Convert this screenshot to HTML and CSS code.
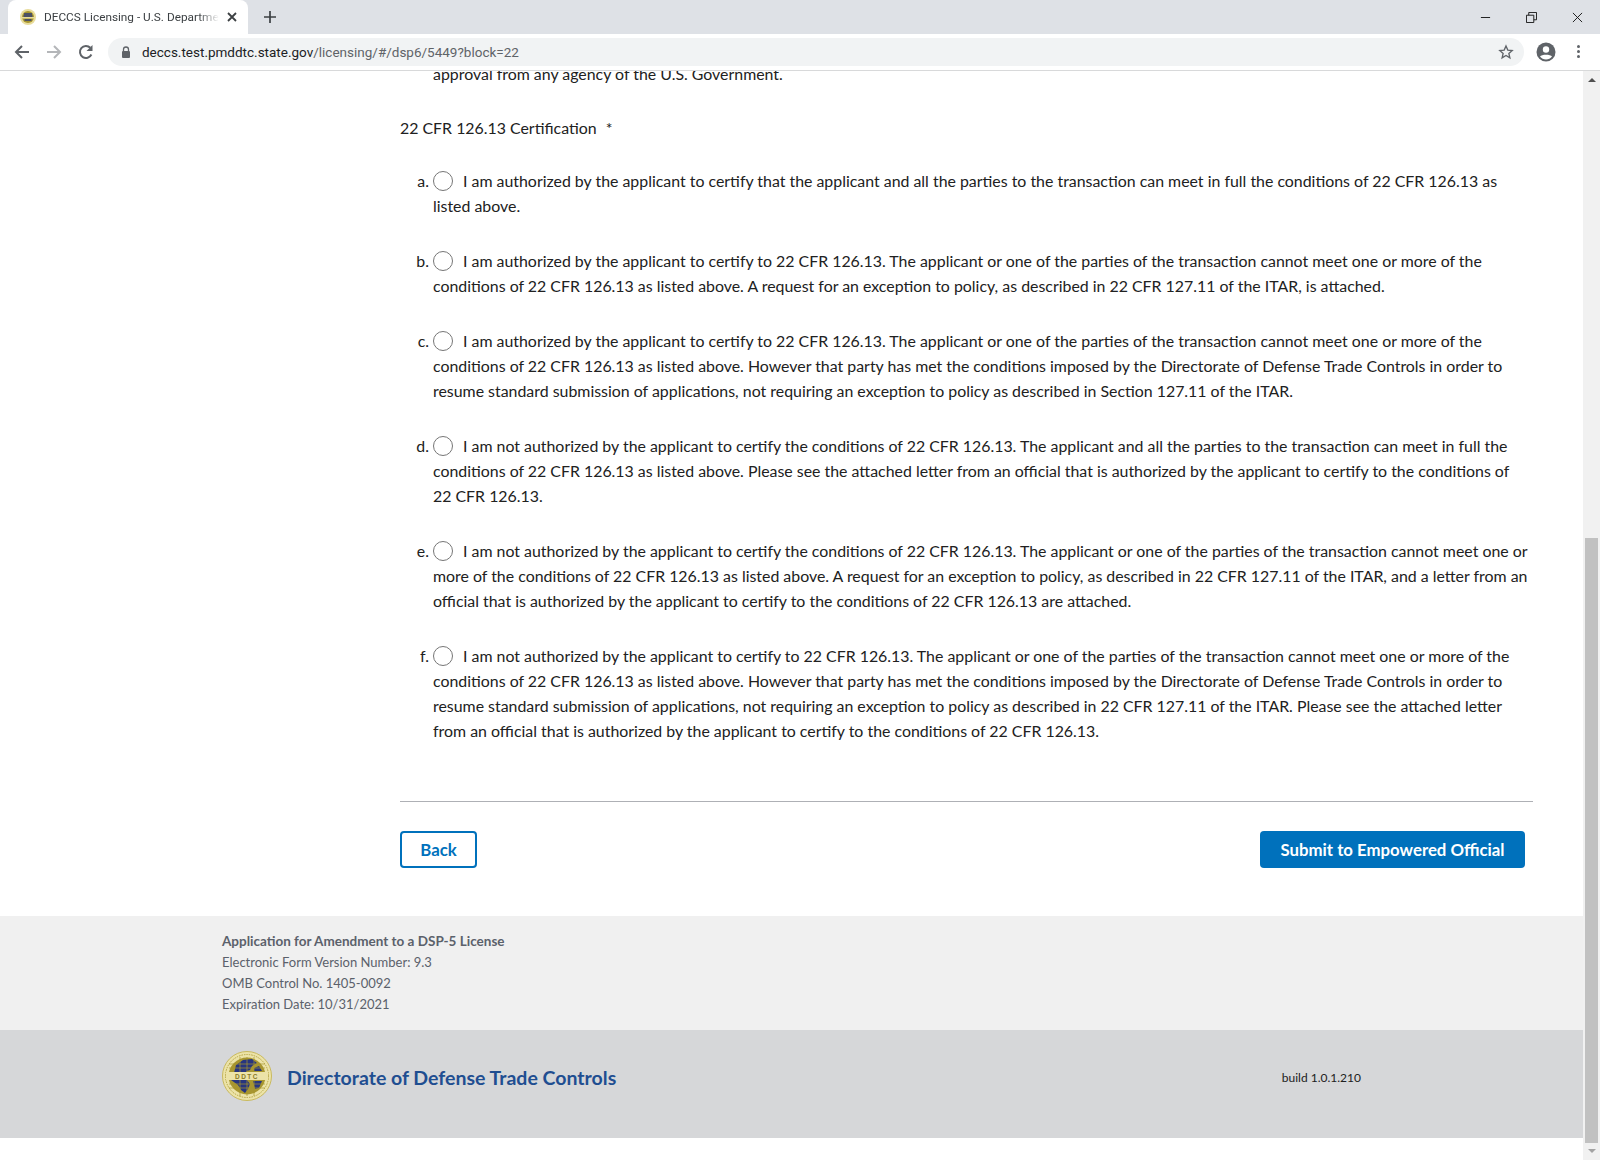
FILE: index.html
```html
<!DOCTYPE html>
<html lang="en">
<head>
  <meta charset="UTF-8">
  <title>DECCS Licensing - U.S. Department of State</title>
  <link rel="stylesheet" href="styles.css">
</head>
<body>
  <div class="tab-strip">
    <div class="tab">
      <svg class="favicon" viewBox="0 0 16 16">
        <circle cx="8" cy="8" r="8" fill="#e8dc9c"/>
        <circle cx="8" cy="8" r="6" fill="#a8962f"/>
        <path d="M4 5h8M3.500 7h9" stroke="#2e3a78" stroke-width="1.500"/>
        <rect x="1" y="8" width="14" height="1.500" fill="#e8dc9c"/>
        <path d="M4.500 11h7" stroke="#2e3a78" stroke-width="1.500"/>
      </svg>
      <span class="tab-title">DECCS Licensing - U.S. Department of State</span>
      <svg class="tab-close" viewBox="0 0 10 10"><path d="M1 1l8 8M9 1l-8 8" stroke="#3c4043" stroke-width="1.800"/></svg>
    </div>
    <svg class="new-tab" viewBox="0 0 12 12"><path d="M6 0v12M0 6h12" stroke="#3c4043" stroke-width="1.700"/></svg>
    <div class="window-controls">
      <svg viewBox="0 0 12 12"><path d="M1 6h10" stroke="#111" stroke-width="1"/></svg>
      <svg viewBox="0 0 12 12"><path d="M.5 3.500h8v8h-8zM3 3.500V.5h8.500v8H8.500" fill="none" stroke="#111" stroke-width="1"/></svg>
      <svg viewBox="0 0 12 12"><path d="M1 1l10 10M11 1L1 11" stroke="#111" stroke-width="1"/></svg>
    </div>
  </div>
  <div class="toolbar">
    <svg class="nav-icon" viewBox="0 0 16 16"><path d="M15 8H2M8 2L2 8l6 6" fill="none" stroke="#5f6368" stroke-width="2"/></svg>
    <svg class="nav-icon" viewBox="0 0 16 16"><path d="M1 8h13M8 2l6 6-6 6" fill="none" stroke="#b4b6b9" stroke-width="2"/></svg>
    <svg class="nav-icon nav-last" viewBox="0 0 16 16"><path d="M13.400 10.500A6 6 0 1 1 12.300 3.800" fill="none" stroke="#5f6368" stroke-width="2"/><path d="M14.500 1v6h-6z" fill="#5f6368"/></svg>
    <div class="omnibox">
      <svg class="lock" viewBox="0 0 10 12"><path d="M2.500 5V3.500a2.500 2.500 0 0 1 5 0V5" fill="none" stroke="#5f6368" stroke-width="1.300"/><rect x="1" y="5" width="8" height="7" rx="1" fill="#5f6368"/></svg>
      <span class="url"><span class="url-host">deccs.test.pmddtc.state.gov</span>/licensing/#/dsp6/5449?block=22</span>
      <svg class="star" viewBox="0 0 24 24"><path d="M12 3l2.700 6.100 6.600.7-5 4.400 1.500 6.500L12 17.300l-5.800 3.400 1.500-6.500-5-4.400 6.600-.7z" fill="none" stroke="#5f6368" stroke-width="2"/></svg>
    </div>
    <svg class="avatar" viewBox="0 0 20 20"><circle cx="10" cy="10" r="9.500" fill="#5f6368"/><circle cx="10" cy="7.500" r="3.200" fill="#fff"/><path d="M4 14.500c1.500-2.500 10.500-2.500 12 0-1.500 2-3.500 3-6 3s-4.500-1-6-3z" fill="#fff"/></svg>
    <div class="menu-dots"><i></i><i></i><i></i></div>
  </div>

  <div class="viewport">
    <div class="page">
      <main class="content">
        <p class="clipped-line">approval from any agency of the U.S. Government.</p>
        <p class="question">22 CFR 126.13 Certification <span class="required">*</span></p>
        <ol class="choices">
          <li class="choice">
            <span class="choice-letter">a.</span><span class="radio"></span>I am authorized by the applicant to certify that the applicant and all the parties to the transaction can meet in full the conditions of 22 CFR 126.13 as<br>listed above.
          </li>
          <li class="choice">
            <span class="choice-letter">b.</span><span class="radio"></span>I am authorized by the applicant to certify to 22 CFR 126.13. The applicant or one of the parties of the transaction cannot meet one or more of the<br>conditions of 22 CFR 126.13 as listed above. A request for an exception to policy, as described in 22 CFR 127.11 of the ITAR, is attached.
          </li>
          <li class="choice">
            <span class="choice-letter">c.</span><span class="radio"></span>I am authorized by the applicant to certify to 22 CFR 126.13. The applicant or one of the parties of the transaction cannot meet one or more of the<br>conditions of 22 CFR 126.13 as listed above. However that party has met the conditions imposed by the Directorate of Defense Trade Controls in order to<br>resume standard submission of applications, not requiring an exception to policy as described in Section 127.11 of the ITAR.
          </li>
          <li class="choice">
            <span class="choice-letter">d.</span><span class="radio"></span>I am not authorized by the applicant to certify the conditions of 22 CFR 126.13. The applicant and all the parties to the transaction can meet in full the<br>conditions of 22 CFR 126.13 as listed above. Please see the attached letter from an official that is authorized by the applicant to certify to the conditions of<br>22 CFR 126.13.
          </li>
          <li class="choice">
            <span class="choice-letter">e.</span><span class="radio"></span>I am not authorized by the applicant to certify the conditions of 22 CFR 126.13. The applicant or one of the parties of the transaction cannot meet one or<br>more of the conditions of 22 CFR 126.13 as listed above. A request for an exception to policy, as described in 22 CFR 127.11 of the ITAR, and a letter from an<br>official that is authorized by the applicant to certify to the conditions of 22 CFR 126.13 are attached.
          </li>
          <li class="choice">
            <span class="choice-letter">f.</span><span class="radio"></span>I am not authorized by the applicant to certify to 22 CFR 126.13. The applicant or one of the parties of the transaction cannot meet one or more of the<br>conditions of 22 CFR 126.13 as listed above. However that party has met the conditions imposed by the Directorate of Defense Trade Controls in order to<br>resume standard submission of applications, not requiring an exception to policy as described in 22 CFR 127.11 of the ITAR. Please see the attached letter<br>from an official that is authorized by the applicant to certify to the conditions of 22 CFR 126.13.
          </li>
        </ol>
        <div class="actions">
          <button class="btn btn-outline">Back</button>
          <button class="btn btn-primary">Submit to Empowered Official</button>
        </div>
      </main>
      <div class="form-info">
        <strong>Application for Amendment to a DSP-5 License</strong>
        <span>Electronic Form Version Number: 9.3</span>
        <span>OMB Control No. 1405-0092</span>
        <span>Expiration Date: 10/31/2021</span>
      </div>
      <footer class="agency">
        <svg class="seal" viewBox="0 0 50 50">
          <circle cx="25" cy="25" r="24.500" fill="#ece3a8" stroke="#c9b95e" stroke-width="1"/>
          <circle cx="25" cy="25" r="21.500" fill="none" stroke="#b5a445" stroke-width="1" stroke-dasharray="1.500 1"/>
          <circle cx="25" cy="25" r="18.500" fill="#a8962f"/>
          <path d="M14 14l7-5 9-1 5 4-5 3-2 4-3 1-2 2H12zM32 17l5-2 3 5h-8zM9 29h16l3 4-2 5-3 4-4-3-3-5zM31 30h9l-3 7-4 1z" fill="#27357f"/>
          <path d="M7 13h36M7 17h36M18 6v16M25 6v16M32 6v16M7 33h36M7 37h36M18 29v16M25 29v16M32 29v16" stroke="#a8962f" stroke-width=".7"/>
          <rect x="4" y="21" width="42" height="8" fill="#ece3a8"/>
          <text class="seal-text" x="25" y="27.500" text-anchor="middle">DDTC</text>
        </svg>
        <span class="agency-name">Directorate of Defense Trade Controls</span>
        <span class="build">build 1.0.1.210</span>
      </footer>
    </div>
    <div class="scrollbar">
      <div class="scroll-up"></div>
      <div class="scroll-track"><div class="scroll-thumb"></div></div>
      <div class="scroll-down"></div>
    </div>
  </div>
</body>
</html>
```
FILE: styles.css
```css
* { margin: 0; padding: 0; box-sizing: border-box; }
html, body {
  height: 100%;
  overflow: hidden;
}
body {
  display: flex;
  flex-direction: column;
  background: #fff;
  color: #212121;
  font-family: "Lato", "Noto Sans", sans-serif;
  font-size: 15.900px;
}

/* browser chrome */
.tab-strip {
  height: 34px;
  flex: none;
  display: flex;
  align-items: center;
  background: #dee1e6;
  padding-left: 8px;
}
.tab {
  width: 240px;
  height: 34px;
  display: flex;
  align-items: center;
  background: #fff;
  border-radius: 8px 8px 0 0;
  padding: 0 11px 0 12px;
  font-family: "Roboto", sans-serif;
  font-size: 11.800px;
  color: #3c4043;
}
.favicon { width: 16px; height: 16px; flex: none; margin-right: 8px; }
.tab-title {
  flex: 1;
  overflow: hidden;
  white-space: nowrap;
  -webkit-mask-image: linear-gradient(to right, #000 88%, transparent 100%);
  mask-image: linear-gradient(to right, #000 88%, transparent 100%);
}
.tab-close { width: 10px; height: 10px; flex: none; margin-left: 8px; }
.new-tab { width: 12px; height: 12px; margin-left: 16px; }
.window-controls {
  margin-left: auto;
  display: flex;
  gap: 35px;
  padding-right: 17px;
}
.window-controls svg { width: 11px; height: 11px; }
.toolbar {
  height: 37px;
  flex: none;
  display: flex;
  align-items: center;
  background: #fff;
  border-bottom: 1px solid #d8d9da;
  padding: 0 0 1px 14px;
}
.nav-icon { width: 16px; height: 16px; margin-right: 16px; flex: none; }
.nav-last { margin-right: 14px; }
.omnibox {
  flex: 1;
  height: 28px;
  display: flex;
  align-items: center;
  background: #f1f3f4;
  border-radius: 14px;
  padding: 0 10px 0 13px;
  font-family: "Roboto", sans-serif;
  font-size: 13.500px;
  color: #5f6368;
}
.lock { width: 10px; height: 12px; margin-right: 11px; }
.url { flex: 1; }
.url-host { color: #202124; }
.star { width: 16px; height: 16px; }
.avatar { width: 20px; height: 20px; margin-left: 12px; flex: none; }
.menu-dots {
  display: flex;
  flex-direction: column;
  gap: 2px;
  margin: 0 20px 0 21px;
}
.menu-dots i { width: 3px; height: 3px; border-radius: 50%; background: #5f6368; }

/* scrolled page */
.viewport { flex: 1; min-height: 0; display: flex; overflow: hidden; }
.page { flex: 1; min-width: 0; }
.content { padding: 0 50px 0 400px; }
.clipped-line { margin: -10px 0 0 33px; line-height: 25px; }
.question { margin-top: 29px; line-height: 25px; }
.required { margin-left: 5px; }
.choices { list-style: none; margin-top: 28px; }
.choice {
  position: relative;
  padding-left: 33px;
  margin-bottom: 30px;
  line-height: 25px;
  white-space: nowrap;
}
.choice-letter {
  position: absolute;
  right: calc(100% - 29px);
  top: 0;
}
.radio {
  display: inline-block;
  width: 20px;
  height: 20px;
  border: 1px solid #767676;
  border-radius: 50%;
  background: #fff;
  margin-right: 10px;
  vertical-align: -4px;
}
.actions {
  display: flex;
  justify-content: space-between;
  border-top: 1px solid #aeb0b5;
  margin-top: 58px;
  padding: 29px 8px 48px 0;
}
.btn {
  height: 37px;
  border-radius: 4px;
  font-family: inherit;
  font-size: 16.800px;
  font-weight: 700;
}
.btn-outline {
  width: 77px;
  background: #fff;
  border: 2px solid #0071bc;
  color: #0071bc;
}
.btn-primary {
  width: 265px;
  background: #0071bc;
  border: 0;
  color: #fff;
}

/* footers */
.form-info {
  height: 114px;
  display: flex;
  flex-direction: column;
  justify-content: center;
  background: #f0f0f0;
  padding-left: 222px;
  color: #5b616b;
  font-size: 13px;
  line-height: 21px;
}
.form-info strong { font-size: 13.500px; }
.agency {
  height: 108px;
  display: flex;
  align-items: flex-start;
  background: #d6d7d9;
  padding: 21px 222px 0;
}
.seal { width: 50px; height: 50px; flex: none; }
.seal-text { font-family: "Liberation Sans", sans-serif; font-size: 6.500px; font-weight: 700; fill: #8a7a24; letter-spacing: 1.500px; }
.agency-name {
  margin: 15px 0 0 15px;
  color: #1f4e91;
  font-size: 19.500px;
  font-weight: 700;
}
.build {
  margin: 19px 0 0 auto;
  color: #212121;
  font-size: 12px;
}

/* page scrollbar */
.scrollbar {
  width: 17px;
  flex: none;
  display: flex;
  flex-direction: column;
  background: #f1f1f1;
}
.scroll-up, .scroll-down {
  height: 17px;
  flex: none;
  position: relative;
}
.scroll-up::after, .scroll-down::after {
  content: "";
  position: absolute;
  left: 5px;
  width: 0;
  height: 0;
  border-left: 4px solid transparent;
  border-right: 4px solid transparent;
}
.scroll-up::after { top: 7px; border-bottom: 4px solid #505050; }
.scroll-down::after { top: 6px; border-top: 4px solid #a3a3a3; }
.scroll-track { flex: 1; padding: 450px 2px 0; }
.scroll-thumb { height: 100%; background: #c1c1c1; }
```
